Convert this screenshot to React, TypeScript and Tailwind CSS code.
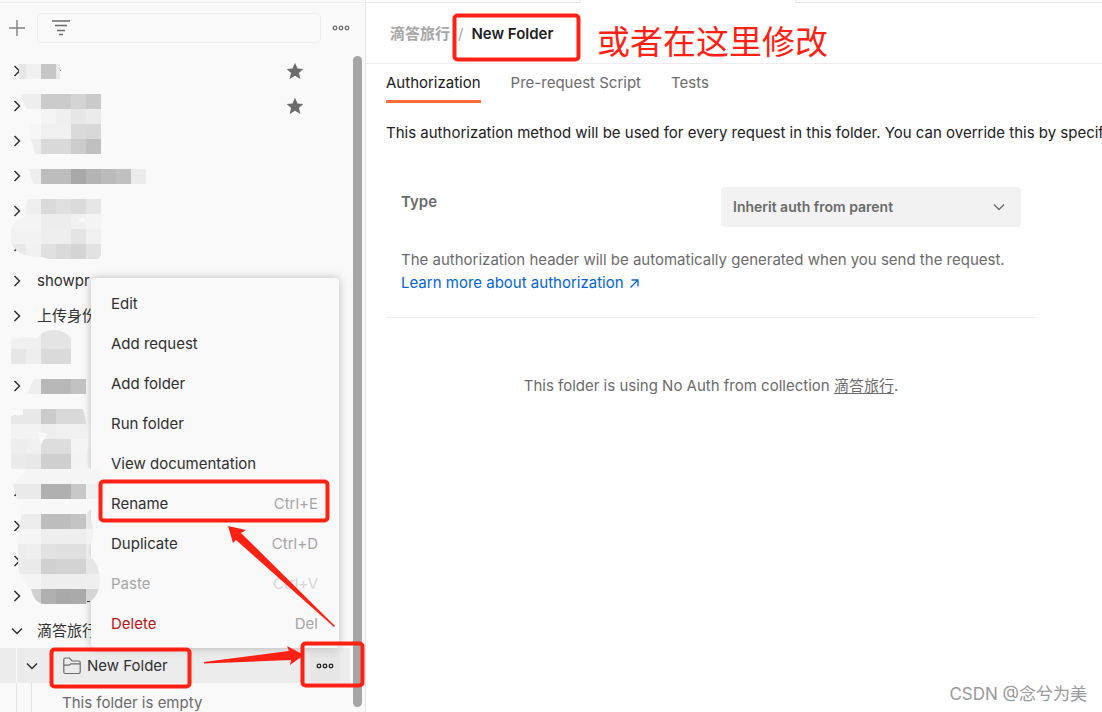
import type { ReactNode } from 'react';

interface TreeItem {
  name?: string;
  starred?: boolean;
  open?: boolean;
}

interface MenuItem {
  label: string;
  shortcut?: string;
  tone?: string;
  keyTone?: string;
}

const collections: TreeItem[] = [
  { starred: true },
  { starred: true },
  {},
  {},
  {},
  {},
  { name: 'showpr' },
  { name: '上传身份' },
  {},
  {},
  {},
  {},
  {},
  {},
  {},
  {},
  { name: '滴答旅行', open: true },
];

const menuItems: MenuItem[] = [
  { label: 'Edit' },
  { label: 'Add request' },
  { label: 'Add folder' },
  { label: 'Run folder' },
  { label: 'View documentation' },
  { label: 'Rename', shortcut: 'Ctrl+E' },
  { label: 'Duplicate', shortcut: 'Ctrl+D' },
  { label: 'Paste', shortcut: 'Ctrl+V', tone: 'text-[#a6a6a6]', keyTone: 'text-[#d6d6d6]' },
  { label: 'Delete', shortcut: 'Del', tone: 'text-[#b81414]' },
];

// Mosaic cells over the private names: x, y, width, colour. Every cell is 15 high.
type Cell = [number, number, number, string];

const cells: Cell[] = [
  [19, 64, 7, '#e6e6e6'], [26, 64, 15, '#f0f0f0'], [41, 64, 15, '#c6c6c6'], [56, 64, 4, '#e8e8e8'],
  [41, 94, 30, '#cbcbcb'], [71, 94, 15, '#d4d4d4'], [86, 94, 15, '#cacaca'],
  [41, 109, 15, '#f4f4f4'], [56, 109, 15, '#efefef'], [71, 109, 15, '#e6e6e6'], [86, 109, 15, '#ebebeb'],
  [30, 124, 11, '#f6f6f6'], [41, 124, 30, '#f0f0f0'], [71, 124, 15, '#dadada'], [86, 124, 15, '#d8d8d8'],
  [41, 139, 30, '#d9d9d9'], [71, 139, 15, '#cccccc'], [86, 139, 15, '#c0c0c0'],
  [41, 169, 30, '#bdbdbd'], [71, 169, 15, '#a8a8a8'], [86, 169, 15, '#b4b4b4'], [101, 169, 15, '#bbbbbb'], [116, 169, 15, '#c0c0c0'], [131, 169, 15, '#ebebeb'],
  [41, 379, 30, '#b8b8b8'], [71, 379, 15, '#c2c2c2'],
];

const upperBlob: Cell[] = [
  [11, 199, 30, '#efefef'], [41, 199, 15, '#dadada'], [56, 199, 15, '#e0e0e0'], [71, 199, 15, '#dbdbdb'], [86, 199, 15, '#e6e6e6'],
  [11, 214, 30, '#f4f4f4'], [41, 214, 30, '#ededed'], [71, 214, 15, '#f0f0f0'], [86, 214, 15, '#f4f4f4'],
  [11, 229, 30, '#f2f2f2'], [41, 229, 30, '#eeeeee'], [71, 229, 15, '#e4e4e4'], [86, 229, 15, '#f0f0f0'],
  [11, 244, 15, '#e9e9e9'], [26, 244, 15, '#f1f1f1'], [41, 244, 15, '#e0e0e0'], [56, 244, 15, '#dadada'], [71, 244, 15, '#d4d4d4'], [86, 244, 15, '#e2e2e2'],
];

const middleBlob: Cell[] = [
  [11, 334, 30, '#f0f0f0'], [41, 329, 30, '#e4e4e4'], [41, 334, 30, '#e4e4e4'],
  [11, 349, 15, '#e6e6e6'], [26, 349, 15, '#eeeeee'], [41, 349, 30, '#dadada'],
];

const lowerBlob: Cell[] = [
  [11, 409, 30, '#e8e8e8'], [41, 409, 15, '#cbcbcb'], [56, 409, 30, '#d9d9d9'],
  [11, 424, 30, '#f3f3f3'], [41, 424, 15, '#eeeeee'], [56, 424, 33, '#f0f0f0'],
  [11, 439, 15, '#ededed'], [26, 439, 15, '#f0f0f0'], [41, 439, 30, '#dddddd'], [71, 439, 19, '#f4f4f4'],
  [11, 454, 15, '#eaeaea'], [26, 454, 15, '#e8e8e8'], [41, 454, 30, '#cfcfcf'], [71, 454, 19, '#f3f3f3'],
  [11, 469, 90, '#f5f5f5'],
  [11, 484, 30, '#eaeaea'], [41, 484, 30, '#b0b0b0'], [71, 484, 15, '#c8c8c8'], [86, 484, 20, '#f0f0f0'],
  [11, 499, 90, '#f8f8f8'],
  [11, 514, 30, '#ededed'], [41, 514, 30, '#bdbdbd'], [71, 514, 15, '#c4c4c4'], [86, 514, 15, '#e8e8e8'],
  [11, 529, 30, '#f5f5f5'], [41, 529, 45, '#eeeeee'], [86, 529, 15, '#f2f2f2'],
  [11, 544, 15, '#ededed'], [26, 544, 15, '#efefef'], [41, 544, 15, '#e2e2e2'], [56, 544, 30, '#dfdfdf'], [86, 544, 15, '#ebebeb'],
  [11, 559, 30, '#eaeaea'], [41, 559, 15, '#d0d0d0'], [56, 559, 30, '#d3d3d3'], [86, 559, 15, '#e6e6e6'],
  [11, 574, 30, '#f4f4f4'], [41, 574, 45, '#eeeeee'], [86, 574, 15, '#efefef'],
  [11, 589, 30, '#d0d0d0'], [41, 589, 15, '#b0b0b0'], [56, 589, 15, '#a8a8a8'], [71, 589, 15, '#aaaaaa'], [86, 589, 15, '#d5d5d5'],
];

function Cells({ data }: { data: Cell[] }) {
  return (
    <>
      {data.map(([x, y, w, fill], i) => (
        <rect key={i} x={x} y={y} width={w} height={15} fill={fill} />
      ))}
    </>
  );
}

function Mosaic() {
  return (
    <svg className="pointer-events-none absolute left-0 top-0" width="365" height="712" shapeRendering="crispEdges" aria-hidden="true">
      <defs>
        <clipPath id="upper">
          <path d="M28 199H101V229Q97 224 88 222L83 217L77 221L82 222H88Q99 224 101 231V255L98 259H48L42 257Q24 257 18 251Q11 247 11 240V229Q14 220 26 216Q24 207 28 199Z" />
        </clipPath>
        <clipPath id="middle">
          <path d="M11 340Q22 335 37 338Q43 330 54 330Q66 330 71 339V364H11Z" />
        </clipPath>
        <clipPath id="lower">
          <path d="M11 416L23 415V409H83L88 430Q90 444 85 458Q84 469 95 469Q104 472 105 485Q105 500 95 507Q87 511 87 514Q95 523 93 540Q86 549 90 556Q100 565 100 581Q99 598 86 604H42Q34 602 31 589L22 579Q18 573 18 558V540Q19 525 22 514L17 499L13 484L28 469H11Z" />
        </clipPath>
      </defs>
      <Cells data={cells} />
      <path d="M21 94H41V109H27Q23 104 21 94Z" fill="#eeeeee" />
      <path d="M31 139H41V154H35Z" fill="#ededed" />
      <path d="M29 169H41V184H33Z" fill="#eeeeee" />
      <path d="M34 379H41V394H27Z" fill="#eeeeee" />
      <path d="M60 70H61V71H60Z" fill="#777777" />
      <g clipPath="url(#upper)"><Cells data={upperBlob} /></g>
      <g clipPath="url(#middle)"><Cells data={middleBlob} /></g>
      <g clipPath="url(#lower)"><Cells data={lowerBlob} /></g>
      <path d="M38 432L47 434L41 445Z" fill="#f9f9f9" />
      <path d="M87 601H90V602H87Z" fill="#333333" />
    </svg>
  );
}

function Chevron({ open }: { open?: boolean }) {
  return (
    <svg width="12" height="12" viewBox="0 0 12 12" fill="none" stroke="#303030" strokeWidth="1.5" aria-hidden="true">
      {open ? <path d="M1 3.5L6 8.5L11 3.5" /> : <path d="M3.5 1L8.5 6L3.5 11" />}
    </svg>
  );
}

function Dots({ color }: { color: string }) {
  return (
    <svg width="18" height="6" viewBox="0 0 18 6" fill="none" stroke={color} strokeWidth="1.3" aria-hidden="true">
      <circle cx="3" cy="3" r="1.8" />
      <circle cx="9" cy="3" r="1.8" />
      <circle cx="15" cy="3" r="1.8" />
    </svg>
  );
}

function Row({ children }: { children: ReactNode }) {
  return <li className="flex h-[35px] shrink-0 items-center pl-[11px]">{children}</li>;
}

function ContextMenu() {
  return (
    <div className="absolute left-[91px] top-[278px] w-[248px] rounded-sm bg-[#f9f9f9] pb-1 pt-[6px] shadow-[0_0_10px_rgba(0,0,0,0.25)]">
      {menuItems.map((item) => (
        <button
          key={item.label}
          type="button"
          className={`flex h-10 w-full items-center justify-between pl-5 pr-[21px] ${item.tone ?? 'text-[#303030]'}`}
        >
          <span>{item.label}</span>
          <span className={item.keyTone ?? 'text-[#a6a6a6]'}>{item.shortcut}</span>
        </button>
      ))}
    </div>
  );
}

function Sidebar() {
  return (
    <aside className="relative flex w-[366px] shrink-0 flex-col border-r border-[#e6e6e6] bg-[#f9f9f9] text-[#303030]">
      <div className="mt-[2px] flex h-[51px] shrink-0 items-center border-t border-[#ededed] pl-2 pr-1">
        <button type="button" aria-label="New" className="shrink-0">
          <svg width="18" height="18" viewBox="0 0 18 18" stroke="#808080" strokeWidth="1.4" aria-hidden="true">
            <path d="M9 1V17M1 9H17" />
          </svg>
        </button>
        <label className="ml-[11px] flex h-[30px] min-w-0 flex-1 items-center rounded-sm border border-[#ededed] pl-[14px]">
          <svg className="shrink-0" width="18" height="16" viewBox="0 0 18 16" stroke="#6b6b6b" strokeWidth="1.3" aria-hidden="true">
            <path d="M0 1H18M3 5.5H15M5 10.5H13M7 14.5H11" />
          </svg>
          <input type="text" aria-label="Filter collections" className="min-w-0 flex-1 bg-transparent px-2 outline-none" />
        </label>
        <button type="button" aria-label="More" className="flex w-10 shrink-0 justify-center">
          <Dots color="#6b6b6b" />
        </button>
      </div>

      <div className="flex min-h-0 flex-1">
        <ul className="flex w-[350px] flex-col overflow-hidden">
          {collections.map((item, i) => (
            <Row key={i}>
              <Chevron open={item.open} />
              <span className="ml-[14px] flex-1 whitespace-nowrap pt-[2px]">{item.name}</span>
              {item.starred && (
                <svg className="mr-[46px]" width="18" height="18" viewBox="0 0 18 18" fill="#6b6b6b" role="img" aria-label="Favourite">
                  <path d="M9 .7L11.5 6.6L17.3 7L12.9 11L14.4 17L9 13.8L3.6 17L5.1 11L.7 7L6.5 6.6Z" />
                </svg>
              )}
            </Row>
          ))}
          {/* Opened folder */}
          <li className="flex h-[35px] shrink-0 bg-[#ececec]">
            <span className="w-[17px] border-r border-[#f9f9f9]" />
            <div className="flex flex-1 items-center pl-[9px] pr-[10px]">
              <Chevron open />
              <svg className="ml-[25px]" width="18" height="18" viewBox="0 0 18 18" fill="none" stroke="#6b6b6b" strokeWidth="1.2" aria-hidden="true">
                <path d="M.8 15V2.5Q.8 1 2.3 1H6.5L9 4H15.7Q17.2 4 17.2 5.5V15Q17.2 16.5 15.7 16.5H2.3Q.8 16.5 .8 15ZM.8 8.2H6.2L7.8 6.8H17.2" />
              </svg>
              <span className="ml-[6px] flex-1 pt-[2px]">New Folder</span>
              <button type="button" aria-label="Folder actions" className="flex size-[30px] items-center justify-center rounded-sm bg-[#e6e6e6]">
                <Dots color="#212121" />
              </button>
            </div>
          </li>
          <li className="flex h-10 shrink-0 text-[#6b6b6b]">
            <span className="w-[17px] border-r border-[#e3e3e3]" />
            <span className="w-[15px] border-r border-[#e3e3e3]" />
            <span className="pl-[30px] leading-10">This folder is empty</span>
          </li>
        </ul>
        <div className="mb-[5px] ml-[3px] mt-[3px] w-[9px] rounded-full bg-[#a6a6a6]" />
      </div>

      <ContextMenu />
      <Mosaic />
    </aside>
  );
}

function FolderPage() {
  return (
    <main className="min-w-0 flex-1 overflow-hidden bg-white text-[#6b6b6b]">
      {/* Bottom edge of the tab strip, open under the active tab */}
      <div className="flex h-[3px]">
        <div className="w-[215px] border-b border-r border-[#e6e6e6]" />
        <div className="w-[214px]" />
        <div className="flex-1 border-b border-l border-[#e6e6e6]" />
      </div>

      <header className="flex h-[61px] items-center border-b border-[#ededed] pl-6 pt-[2px]">
        <a href="#collection" className="font-semibold text-[#a6a6a6]">滴答旅行</a>
        <span className="mx-2 text-[#a6a6a6]">/</span>
        <h1 className="font-semibold text-[#212121]">New Folder</h1>
      </header>

      <nav className="flex gap-[30px] pl-5">
        <button type="button" className="h-[39px] border-b-3 border-[#ff6c37] pt-[2px] text-[#212121]">Authorization</button>
        <button type="button" className="h-[39px] border-b-3 border-transparent pt-[2px]">Pre-request Script</button>
        <button type="button" className="h-[39px] border-b-3 border-transparent pt-[2px]">Tests</button>
      </nav>

      <p className="mt-[18px] whitespace-nowrap pl-5 leading-6 text-[#212121]">
        This authorization method will be used for every request in this folder. You can override this by specifying one in the request.
      </p>

      <div className="ml-5 max-w-[650px]">
        <section className="border-b border-[#ededed] px-[15px] pb-[23px] pt-[42px]">
          <div className="flex justify-between">
            <label htmlFor="auth-type" className="pt-[3px] font-semibold leading-6">Type</label>
            <div className="relative w-[300px]">
              <select id="auth-type" className="h-10 w-full appearance-none rounded-[4px] bg-[#f2f2f2] pb-[2px] pl-3 pr-10 text-[14px] font-semibold">
                <option>Inherit auth from parent</option>
              </select>
              <svg className="pointer-events-none absolute right-4 top-[14px]" width="12" height="12" viewBox="0 0 12 12" fill="none" stroke="#6b6b6b" strokeWidth="1.4" aria-hidden="true">
                <path d="M1 3.5L6 8.5L11 3.5" />
              </svg>
            </div>
          </div>
          <p className="mt-[21px] leading-[23px]">
            The authorization header will be automatically generated when you send the request.
            <br />
            <a href="#learn" className="text-[#0265d2]">
              Learn more about authorization
              <svg className="ml-[6px] inline-block align-baseline" width="9" height="9" viewBox="0 0 9 9" fill="none" stroke="currentColor" strokeWidth="1.3" aria-hidden="true">
                <path d="M.5 8.5L8 1M1.5 1H8V7.5" />
              </svg>
            </a>
          </p>
        </section>
        <p className="mt-[56px] text-center leading-6">
          This folder is using No Auth from collection <a href="#collection" className="underline underline-offset-2">滴答旅行</a>.
        </p>
      </div>
    </main>
  );
}

// Red marks drawn on top of the page
function Annotations() {
  return (
    <div className="pointer-events-none absolute inset-0 overflow-hidden">
      <svg className="absolute left-0 top-0" width="1102" height="712" fill="none" stroke="#ff2214" strokeWidth="4" aria-hidden="true">
        <rect x="454.5" y="15.5" width="124" height="44" rx="3" />
        <rect x="100.5" y="481.5" width="227" height="39" rx="3" />
        <rect x="51.5" y="649.5" width="138" height="37" rx="3" />
        <rect x="302.5" y="643.5" width="60" height="42" rx="3" />
        <g fill="#ff2214" stroke="none">
          <path d="M228 526L246 530L241 533L335 626L334 627L236 540L233 543Z" />
          <path d="M204 663.5L204 662L289 651L287 646L304 655L290 665L291 660Z" />
        </g>
      </svg>
      <p className="absolute left-[597px] top-[18px] whitespace-nowrap text-[33px] leading-[48px] text-[#ff2214]">或者在这里修改</p>
      <p className="absolute bottom-[6px] right-[15px] text-[17px] leading-6 text-[#999999]">CSDN @念兮为美</p>
    </div>
  );
}

export default function App() {
  return (
    <div className="relative flex h-screen overflow-hidden font-[Inter,'Noto_Sans_CJK_SC',sans-serif] text-[15px]">
      <Sidebar />
      <FolderPage />
      <Annotations />
    </div>
  );
}
